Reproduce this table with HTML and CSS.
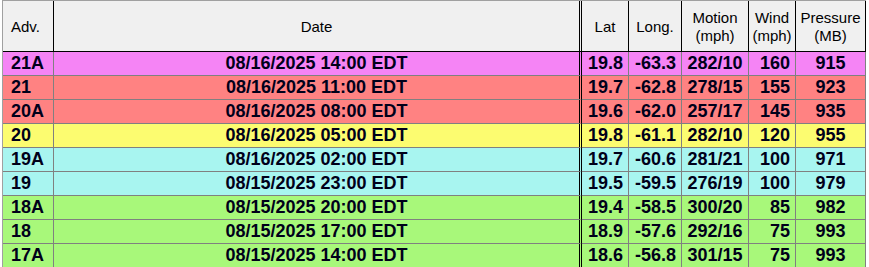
FILE: index.html
```html
<!DOCTYPE html>
<html>
<head>
<meta charset="utf-8">
<link rel="stylesheet" href="styles.css">
</head>
<body>
<div class="grid">
  <div class="h left">Adv.</div>
  <div class="h dbl">Date</div>
  <div class="h">Lat</div>
  <div class="h">Long.</div>
  <div class="h">Motion<br>(mph)</div>
  <div class="h">Wind<br>(mph)</div>
  <div class="h">Pressure<br>(MB)</div>

  <div class="c adv pink">21A</div><div class="c date pink dbl">08/16/2025 14:00 EDT</div><div class="c r pink">19.8</div><div class="c r pink">-63.3</div><div class="c m pink">282/10</div><div class="c r pink">160</div><div class="c m pink">915</div>
  <div class="c adv red">21</div><div class="c date red dbl">08/16/2025 11:00 EDT</div><div class="c r red">19.7</div><div class="c r red">-62.8</div><div class="c m red">278/15</div><div class="c r red">155</div><div class="c m red">923</div>
  <div class="c adv red">20A</div><div class="c date red dbl">08/16/2025 08:00 EDT</div><div class="c r red">19.6</div><div class="c r red">-62.0</div><div class="c m red">257/17</div><div class="c r red">145</div><div class="c m red">935</div>
  <div class="c adv yel">20</div><div class="c date yel dbl">08/16/2025 05:00 EDT</div><div class="c r yel">19.8</div><div class="c r yel">-61.1</div><div class="c m yel">282/10</div><div class="c r yel">120</div><div class="c m yel">955</div>
  <div class="c adv cyan">19A</div><div class="c date cyan dbl">08/16/2025 02:00 EDT</div><div class="c r cyan">19.7</div><div class="c r cyan">-60.6</div><div class="c m cyan">281/21</div><div class="c r cyan">100</div><div class="c m cyan">971</div>
  <div class="c adv cyan">19</div><div class="c date cyan dbl">08/15/2025 23:00 EDT</div><div class="c r cyan">19.5</div><div class="c r cyan">-59.5</div><div class="c m cyan">276/19</div><div class="c r cyan">100</div><div class="c m cyan">979</div>
  <div class="c adv grn">18A</div><div class="c date grn dbl">08/15/2025 20:00 EDT</div><div class="c r grn">19.4</div><div class="c r grn">-58.5</div><div class="c m grn">300/20</div><div class="c r grn">85</div><div class="c m grn">982</div>
  <div class="c adv grn">18</div><div class="c date grn dbl">08/15/2025 17:00 EDT</div><div class="c r grn">18.9</div><div class="c r grn">-57.6</div><div class="c m grn">292/16</div><div class="c r grn">75</div><div class="c m grn">993</div>
  <div class="c adv grn">17A</div><div class="c date grn dbl">08/15/2025 14:00 EDT</div><div class="c r grn">18.6</div><div class="c r grn">-56.8</div><div class="c m grn">301/15</div><div class="c r grn">75</div><div class="c m grn">993</div>
</div>
</body>
</html>
```

FILE: styles.css
```css
html, body {
  margin: 0;
  padding: 0;
  background: #ffffff;
  overflow: hidden;
}
body {
  font-family: "Liberation Sans", Arial, sans-serif;
  color: #000;
}
.grid {
  margin-left: 2px;
  display: grid;
  grid-template-columns: 51px 528px 47px 53px 67px 47px 70px;
  grid-template-rows: 51px;
  grid-auto-rows: 24px;
  border-top: 1px solid #a0a0a0;
  border-left: 1px solid #a0a0a0;
  width: max-content;
}
.h {
  box-sizing: border-box;
  background: #f0f0f0;
  border-right: 1px solid #000;
  border-bottom: 1px solid #000;
  font-size: 15px;
  line-height: 18px;
  display: flex;
  align-items: center;
  justify-content: center;
  text-align: center;
  padding-top: 1px;
}
.h.left {
  justify-content: flex-start;
  padding-left: 8px;
}
.c {
  box-sizing: border-box;
  border-right: 1px solid #808080;
  border-bottom: 1px solid #808080;
  font-size: 18px;
  font-weight: bold;
  line-height: 23px;
  white-space: nowrap;
  color: #00001a;
}
.dbl {
  border-right: 3px double #000 !important;
}
.adv { padding-left: 8px; }
.date { text-align: center; }
.r { text-align: right; padding-right: 5px; }
.m { text-align: center; }
.pink { background: #f584f5; }
.red { background: #ff8282; }
.yel { background: #fcfc70; }
.cyan { background: #a8f5f0; }
.grn { background: #a8f87a; }
```
